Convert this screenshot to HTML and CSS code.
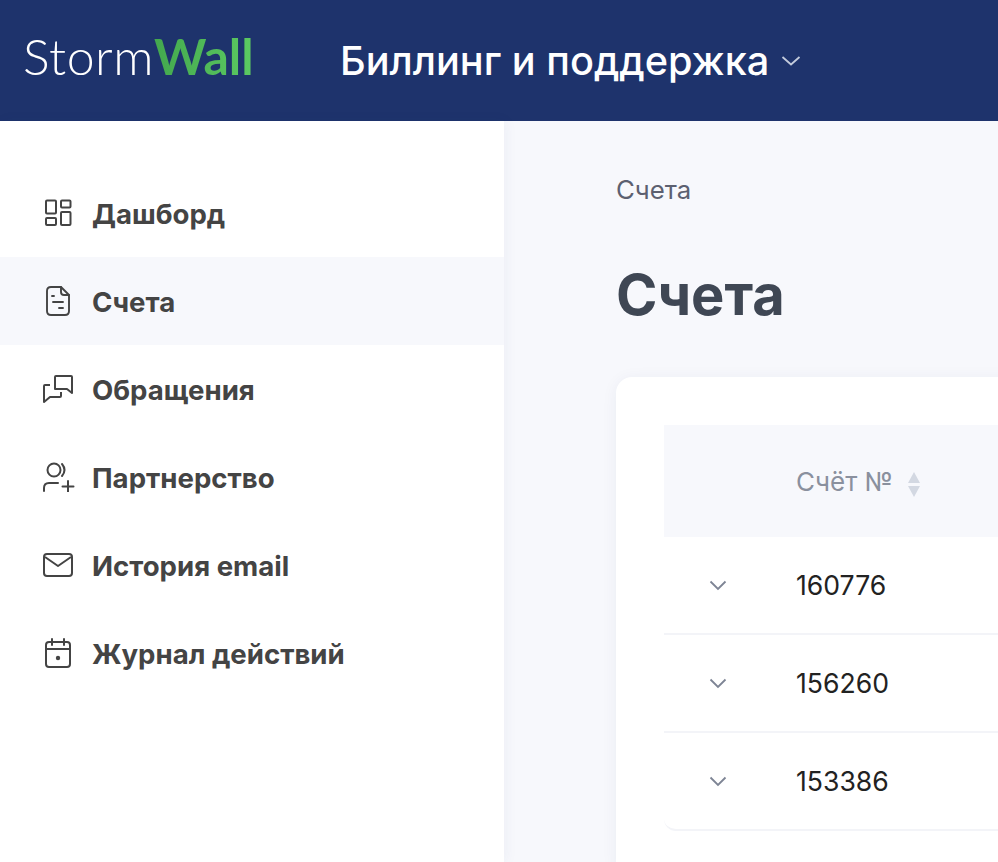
FILE: index.html
```html
<!DOCTYPE html>
<html>
<head>
	<title>Счета</title>
	<meta name="viewport" content="width=device-width, initial-scale=1" />
	<link rel="stylesheet" href="styles.css">
</head>
<body>
	<header class="header">
		<div class="logo"><span class="logo-storm">Storm</span><span class="logo-wall">Wall</span></div>
		<div class="product">Биллинг и поддержка</div>
		<svg class="product-arrow" width="20" height="12" viewBox="0 0 20 12"><path d="M1.5 2 L10 9.5 L18.5 2" fill="none" stroke="#c3cbdc" stroke-width="1.8"/></svg>
	</header>
	<div class="main">
		<nav class="sidebar">
			<a class="nav-item">
				<svg class="nav-icon" width="28" height="28" viewBox="0 0 28 28"><g fill="none" stroke="#444" stroke-width="2"><rect x="2" y="1.5" width="10" height="13" rx="1"/><rect x="17" y="1.5" width="9.500" height="7" rx="1"/><rect x="2" y="19" width="10" height="7" rx="1"/><rect x="17" y="13" width="9.500" height="13" rx="1"/></g></svg>
				<span>Дашборд</span>
			</a>
			<a class="nav-item active">
				<svg class="nav-icon" width="24" height="30" viewBox="0 0 24 30"><g fill="none" stroke="#444" stroke-width="1.900" stroke-linecap="round" stroke-linejoin="round"><path d="M5 1 H15 L23 9 V25 Q23 29 19 29 H5 Q1 29 1 25 V5 Q1 1 5 1 Z"/><path d="M15 1 V6 Q15 9 18 9 H23"/><path d="M6 10 H8"/><path d="M7 16 H17"/><path d="M13 22 H17"/></g></svg>
				<span>Счета</span>
			</a>
			<a class="nav-item">
				<svg class="nav-icon" width="30" height="28" viewBox="0 0 30 28"><g fill="none" stroke="#444" stroke-width="2" stroke-linejoin="round"><path d="M12 13 V2 Q12 1 13 1 H28 Q29 1 29 2 V18 L24 14 H12 Z"/><path d="M7 10 H2 Q1 10 1 11 V27 L7 22 H17 Q18 22 18 21 V17"/></g></svg>
				<span>Обращения</span>
			</a>
			<a class="nav-item">
				<svg class="nav-icon" width="32" height="30" viewBox="0 0 32 30"><g fill="none" stroke="#444" stroke-width="2" stroke-linecap="round"><circle cx="11" cy="8" r="6.500"/><path d="M19 2 Q24 8 19 14"/><path d="M1 29 V26 Q1 21 6 21 H15"/><path d="M25 19 V30"/><path d="M19.500 24.500 H30.500"/></g></svg>
				<span>Партнерство</span>
			</a>
			<a class="nav-item">
				<svg class="nav-icon" width="30" height="24" viewBox="0 0 30 24"><g fill="none" stroke="#444" stroke-width="2" stroke-linejoin="round"><rect x="1" y="1" width="28" height="22" rx="3"/><path d="M2 4 L15 13 L28 4"/></g></svg>
				<span>История email</span>
			</a>
			<a class="nav-item">
				<svg class="nav-icon" width="28" height="30" viewBox="0 0 28 30"><g fill="none" stroke="#444" stroke-width="2" stroke-linecap="round"><rect x="2" y="4" width="24" height="25" rx="3"/><path d="M2 11 H26"/><path d="M8 1 V7"/><path d="M20 1 V7"/></g><circle cx="14" cy="20" r="2.200" fill="#444"/></svg>
				<span>Журнал действий</span>
			</a>
		</nav>
		<main class="content">
			<div class="crumbs">Счета</div>
			<h1 class="title">Счета</h1>
			<section class="card">
				<div class="table-head">
					<span class="col-toggle"></span>
					<span class="head-label">Счёт №</span>
					<span class="sorter"><i class="sort-up"></i><i class="sort-down"></i></span>
				</div>
				<div class="row">
					<span class="col-toggle"><svg width="18" height="11" viewBox="0 0 18 11"><path d="M1.500 1.500 L9 9 L16.500 1.500" fill="none" stroke="#7d8494" stroke-width="1.800"/></svg></span>
					<span>160776</span>
				</div>
				<div class="row">
					<span class="col-toggle"><svg width="18" height="11" viewBox="0 0 18 11"><path d="M1.500 1.500 L9 9 L16.500 1.500" fill="none" stroke="#7d8494" stroke-width="1.800"/></svg></span>
					<span>156260</span>
				</div>
				<div class="row last">
					<span class="col-toggle"><svg width="18" height="11" viewBox="0 0 18 11"><path d="M1.500 1.500 L9 9 L16.500 1.500" fill="none" stroke="#7d8494" stroke-width="1.800"/></svg></span>
					<span>153386</span>
				</div>
			</section>
		</main>
	</div>
</body>
</html>
```
FILE: styles.css
```css
html, body {
	height: 100%;
}
body {
	margin: 0;
	overflow: hidden;
	font-family: Inter, "Noto Sans", sans-serif;
	background-color: #f7f8fc;
	color: #444;
}
.header {
	display: flex;
	align-items: center;
	height: 121px;
	background-color: #1e336c;
	color: #fff;
}
.logo {
	flex: 0 0 340px;
	padding-left: 23px;
	box-sizing: border-box;
	font-family: Lato, sans-serif;
	font-size: 50px;
	line-height: 50px;
	margin-top: -10px;
}
.logo-storm {
	font-weight: 300;
	letter-spacing: 0.5px;
}
.logo-wall {
	font-weight: 700;
	color: #4fb958;
	background-image: linear-gradient(90deg, #43a84e, #5cc962);
	-webkit-background-clip: text;
	background-clip: text;
	-webkit-text-fill-color: transparent;
}
.product {
	font-size: 39.700px;
	font-weight: 500;
	margin-right: 12px;
}
.main {
	display: flex;
	height: 741px;
}
.sidebar {
	flex: 0 0 504px;
	padding-top: 48px;
	background-color: #fff;
	box-shadow: 2px 0 12px rgba(30, 51, 108, 0.05);
}
.nav-item {
	display: grid;
	grid-template-columns: 32px 1fr;
	column-gap: 17px;
	align-items: center;
	justify-items: start;
	height: 88px;
	padding-left: 43px;
	font-size: 27.600px;
	font-weight: 700;
	color: #444;
}
.nav-item span {
	padding-top: 2px;
}
.nav-item.active {
	background-color: #f7f8fc;
}
.nav-icon {
	display: block;
}
.nav-item:nth-child(1) .nav-icon,
.nav-item:nth-child(6) .nav-icon {
	margin-left: 1px;
}
.nav-item.active .nav-icon {
	margin-left: 3px;
}
.content {
	flex: 1;
	padding: 55px 0 0 112px;
	overflow: hidden;
}
.crumbs {
	font-size: 25.800px;
	line-height: 28px;
	color: #5c6070;
}
.title {
	margin: 59px 0 0;
	font-size: 56px;
	line-height: 64px;
	font-weight: 700;
	color: #3f4754;
}
.card {
	margin-top: 50px;
	width: 600px;
	padding: 48px 0 48px 48px;
	background-color: #fff;
	border-radius: 16px;
	box-shadow: 0 2px 16px rgba(30, 51, 108, 0.06);
}
.table-head {
	display: flex;
	align-items: center;
	height: 112px;
	background-color: #f7f8fc;
	font-size: 26px;
	color: #8a909e;
}
.col-toggle {
	display: flex;
	justify-content: center;
	flex: 0 0 108px;
	margin-right: 24px;
}
.head-label {
	margin-right: 15px;
}
.sorter {
	display: flex;
	flex-direction: column;
	gap: 3px;
	margin-top: 6px;
}
.sort-up, .sort-down {
	display: block;
	width: 0;
	height: 0;
	border-left: 6.500px solid transparent;
	border-right: 6.500px solid transparent;
}
.sort-up {
	border-bottom: 11px solid #d3d8e2;
}
.sort-down {
	border-top: 11px solid #d3d8e2;
}
.row {
	display: flex;
	align-items: center;
	height: 96px;
	border-bottom: 2px solid #f3f4f8;
	font-size: 26.600px;
	color: #222;
}
.row.last {
	border-radius: 0 0 12px 12px;
}
```
